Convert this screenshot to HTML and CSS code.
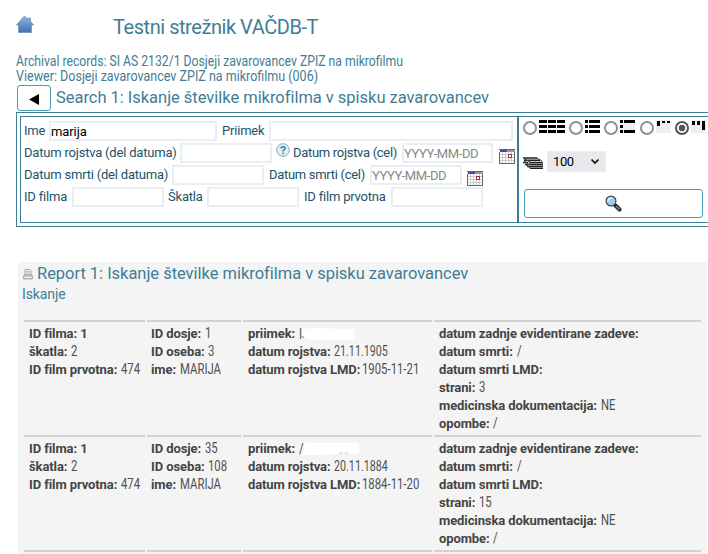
FILE: index.html
```html
<!DOCTYPE html>
<html lang="sl">
<head>
<meta charset="utf-8">
<title>Testni strežnik VAČDB-T</title>
<link rel="stylesheet" href="styles.css">
</head>
<body>
<svg class="defs" width="0" height="0">
  <defs>
    <linearGradient id="roof" x1="0" y1="0" x2="0" y2="1"><stop offset="0" stop-color="#8db4de"/><stop offset="1" stop-color="#3d71b0"/></linearGradient>
    <symbol id="cal" viewBox="0 0 16 15" shape-rendering="crispEdges">
      <path fill="#fff" d="M0 0h16v15H0z"/><path fill="#999" d="M8 0h8v3H8z"/>
      <path stroke="#ccc" d="M3.500 3v11M6.500 3v11M9.500 3v11M12.500 3v11M1 5.500h14M1 8.500h14M1 11.500h14"/>
      <path fill="none" stroke="#666" d="M.5 3v11.500h15V3M0 .5h16"/><path fill="#4545aa" d="M1 1h7v2H1z"/>
      <path fill="#fff" stroke="#a33" d="M9.500 5.500h3v3h-3z"/>
    </symbol>
  </defs>
</svg>
<header class="top">
  <svg class="home" width="18" height="17" viewBox="0 0 18 17"><path fill="url(#roof)" stroke="#5b87b8" stroke-width=".6" d="M9 .5l3 2.500V2h2.500v3.200L17.600 9H15.500v7.500h-13V9H.5L7.500.8z"/></svg>
  <h1>Testni strežnik VAČDB-T</h1>
</header>
<div class="crumbs">
  <div class="c1">Archival records: SI AS 2132/1 Dosjeji zavarovancev ZPIZ na mikrofilmu</div>
  <div class="c2">Viewer: Dosjeji zavarovancev ZPIZ na mikrofilmu (006)</div>
</div>
<div class="search-head">
  <button class="back"><svg width="10" height="11" viewBox="0 0 10 11"><path d="M0 5.500L10 0v11z"/></svg></button>
  <h2>Search 1: Iskanje številke mikrofilma v spisku zavarovancev</h2>
</div>
<form class="search">
  <div class="fields">
    <div class="row"><label class="w-ime">Ime</label><input class="wide1" value="marija"><label class="w-pri">Priimek</label><input class="wide2"></div>
    <div class="row"><label class="w-roj">Datum rojstva (del datuma)</label><input class="i92"><svg class="help" width="14" height="14" viewBox="0 0 14 14"><circle cx="7" cy="7" r="6.300" fill="#e2f0f5" stroke="#82a9b8"/><path fill="none" stroke="#3d79ad" stroke-width="1.500" d="M5 5.500C5 3 9.200 3.200 9 5.400C8.900 6.700 7.100 6.600 7.100 8.400M7.100 9.600v1.400"/></svg><label class="w-rojc">Datum rojstva (cel)</label><input class="i91" placeholder="YYYY-MM-DD"><svg class="cal" width="16" height="15"><use href="#cal"/></svg></div>
    <div class="row"><label class="w-smr">Datum smrti (del datuma)</label><input class="i92"><label class="w-smrc">Datum smrti (cel)</label><input class="i92" placeholder="YYYY-MM-DD"><svg class="cal near" width="16" height="15"><use href="#cal"/></svg></div>
    <div class="row"><label class="w-idf">ID filma</label><input class="i92"><label class="w-ska">Škatla</label><input class="i92"><label class="w-prv">ID film prvotna</label><input class="i92"></div>
  </div>
  <div class="options">
    <div class="views">
      <input type="radio" name="v"><svg width="26" height="13" viewBox="0 0 26 13" shape-rendering="crispEdges"><path stroke="#000" stroke-width="3" stroke-dasharray="8 1" d="M0 1.500h26M0 6.500h26M0 11.500h26"/></svg>
      <input type="radio" name="v"><svg width="15" height="13" viewBox="0 0 15 13" shape-rendering="crispEdges"><path stroke="#000" stroke-width="3" stroke-dasharray="3 1 11 1" d="M0 1.500h15M0 6.500h15M0 11.500h15"/></svg>
      <input type="radio" name="v"><svg class="gap" width="15" height="13" viewBox="0 0 15 13" shape-rendering="crispEdges"><path fill="#eee" d="M0 0h15v13H0z"/><path stroke="#000" stroke-width="3" d="M0 1.500h3M4 1.500h11M0 6.500h3M0 11.500h3M4 11.500h11"/></svg>
      <input type="radio" name="v"><svg width="15" height="13" viewBox="0 0 15 13" shape-rendering="crispEdges"><path fill="#eee" d="M0 0h15v13H0z"/><path d="M1 1h3v5H1zM6 1h3v2H6zM11 1h3v2h-3z"/></svg>
      <input type="radio" name="v" checked><svg width="15" height="13" viewBox="0 0 15 13" shape-rendering="crispEdges"><path fill="#eee" d="M0 0h15v13H0z"/><path d="M1 1h3v4H1zM6 1h3v4H6zM11 1h3v9h-3z"/></svg>
    </div>
    <div class="count">
      <svg width="20" height="12" viewBox="0 0 20 12"><path stroke="#222" stroke-width="1.500" d="M0 1h14M1 3.200h16M0 5.400h5M6 5.400h14M2 7.600h4M6.500 7.600H20M4 9.600h16M7 11.400h13"/><path stroke="#444" d="M0 1l7 4M1 4l6 4M2 7l5 4M14 1l5 3"/></svg>
      <div class="select"><span>100</span><svg width="10" height="7" viewBox="0 0 10 7"><path d="M1.500 1.500L5 5l3.500-3.500" fill="none" stroke="#111" stroke-width="1.700"/></svg></div>
    </div>
    <button class="go" type="button"><svg width="17" height="17" viewBox="0 0 17 17"><path stroke="#222" stroke-width="4" stroke-linecap="round" d="M10.500 10.500l4 4"/><path stroke="#3486c2" stroke-width="2" stroke-linecap="round" d="M11.500 11.500l2.500 2.500"/><circle cx="6" cy="6" r="4.900" fill="#9bd0f4" stroke="#444" stroke-width="1.200"/><path d="M3 6.500C3 4 4.500 3 6.500 3" fill="none" stroke="#d8efff" stroke-width="1.500"/></svg></button>
  </div>
</form>
<main class="report">
  <div class="report-head">
    <svg width="10" height="11" viewBox="0 0 10 11"><path fill="#eee" stroke="#999" stroke-width=".8" d="M2 .5h5l1 1V6H2z"/><path stroke="#c9a0a0" stroke-width=".7" d="M3 2.500h4M3 4h4"/><path fill="#ccc" stroke="#888" stroke-width=".6" d="M1 6h8l.6 2v2H.4V8z"/><path stroke="#eee" d="M1.500 8.500h7"/></svg>
    <h2>Report 1: Iskanje številke mikrofilma v spisku zavarovancev</h2>
  </div>
  <div class="sub">Iskanje</div>
  <div class="grid">
    <div><p><b>ID filma: 1</b></p><p><b>škatla:</b> <span>2</span></p><p><b>ID film prvotna:</b> <span>474</span></p></div>
    <div><p><b>ID dosje:</b> <span>1</span></p><p><b>ID oseba:</b> <span>3</span></p><p><b>ime:</b> <span>MARIJA</span></p></div>
    <div><p class="name"><b>priimek:</b> <span>I</span><svg class="mask" width="54" height="12" viewBox="0 0 54 12"><path fill="#fff" d="M1 2L9 0l43 1 2 2-1 8.500H7L1 7z"/><path d="M1 8l2 2" stroke="#777"/></svg></p><p><b>datum rojstva:</b> <span class="dotted">21.11.1905</span></p><p><b>datum rojstva LMD:</b> <span class="date">1905-11-21</span></p></div>
    <div><p><b>datum zadnje evidentirane zadeve:</b></p><p><b>datum smrti:</b> <span>/</span></p><p><b>datum smrti LMD:</b></p><p><b>strani:</b> <span>3</span></p><p><b>medicinska dokumentacija:</b> <span>NE</span></p><p><b>opombe:</b> <span>/</span></p></div>
    <div><p><b>ID filma: 1</b></p><p><b>škatla:</b> <span>2</span></p><p><b>ID film prvotna:</b> <span>474</span></p></div>
    <div><p><b>ID dosje:</b> <span>35</span></p><p><b>ID oseba:</b> <span>108</span></p><p><b>ime:</b> <span>MARIJA</span></p></div>
    <div><p class="name"><b>priimek:</b> <span>/</span><svg class="mask" width="56" height="12" viewBox="0 0 56 12"><path fill="#fff" d="M2 0h52l2 2v8l-2 1H35l-14 1H0z"/><path d="M36 10h4M42 10h3" stroke="#ccc"/></svg></p><p><b>datum rojstva:</b> <span class="dotted">20.11.1884</span></p><p><b>datum rojstva LMD:</b> <span class="date">1884-11-20</span></p></div>
    <div><p><b>datum zadnje evidentirane zadeve:</b></p><p><b>datum smrti:</b> <span>/</span></p><p><b>datum smrti LMD:</b></p><p><b>strani:</b> <span>15</span></p><p><b>medicinska dokumentacija:</b> <span>NE</span></p><p><b>opombe:</b> <span>/</span></p></div>
    <div></div><div></div><div></div><div></div>
  </div>
</main>
</body>
</html>
```
FILE: styles.css
```css
* { box-sizing: border-box; }
html { overflow: hidden; }
body { margin: 0; padding-top: 16px; height: 554px; overflow: hidden; background: #fff; color: #3f7d94; font: 13px Roboto, "Liberation Sans", sans-serif; }
svg { display: block; flex: none; }
.defs { position: absolute; }
h1, h2, p { margin: 0; font-weight: 400; white-space: nowrap; }
.top { display: flex; height: 38px; padding-left: 16px; }
h1 { margin-left: 79px; font-size: 20px; line-height: 23px; letter-spacing: -.45px; }
.crumbs { padding-left: 16px; line-height: 15px; height: 31px; white-space: nowrap; font-size: 14px; }
.c1, .c2 { width: max-content; transform-origin: left; }
.c1 { transform: scaleX(.871); }
.c2 { transform: scaleX(.894); }
.search-head { display: flex; height: 27px; padding-left: 17px; }
.back { width: 34px; height: 26px; padding: 3px 0 0; border: 1px solid #4c9db5; border-radius: 3px; background: #fff; display: grid; place-items: center; }
h2 { font-size: 16.5px; line-height: 25px; letter-spacing: -.03px; }
.search-head h2 { margin-left: 5px; }
.search { display: flex; width: 720px; height: 115px; margin-left: 16px; padding: 3px; border: 1px solid #3f7d94; color: #235268; }
.fields { width: 499px; padding: 4px 0 0 3px; border: 1px solid #3f7d94; border-right-width: 2px; }
.row { display: flex; height: 22px; align-items: flex-start; }
.row label { flex: none; line-height: 19px; white-space: nowrap; letter-spacing: -.2px; }
.row input { flex: none; height: 20px; padding: 0; border: 2px solid #e7eff3; background: #fff; font: 13px Roboto, sans-serif; letter-spacing: -.1px; color: #000; }
.row input::placeholder { color: #888; opacity: 1; letter-spacing: -.4px; }
.i92 { width: 92px; } .i91 { width: 91px; }
.wide1 { width: 168px; } .wide2 { width: 244px; }
.w-ime { width: 25px; } .w-pri { width: 52px; padding-left: 5px; }
.w-roj { width: 156px; } .row .w-rojc { width: 112px; padding-left: 3px; letter-spacing: -.3px; }
.w-smr { width: 148px; } .row .w-smrc { width: 106px; padding-left: 5px; letter-spacing: -.3px; }
.w-idf { width: 48px; } .w-ska { width: 43px; padding-left: 4px; } .w-prv { width: 92px; padding-left: 5px; }
.help { margin-left: 4px; }
.cal { margin: 6px 0 0 6px; }
.near { margin-left: 5px; }
.options { width: 210px; border: 1px solid #3f7d94; border-left: 0; padding: 3px 0 0 4px; }
.views { display: flex; height: 31px; }
.views input { appearance: none; width: 14px; height: 14px; margin: 1px 2px 0 0; border: 2px solid #8f8f9d; border-radius: 50%; }
.views input:checked { border-color: #555; background: radial-gradient(circle, #555 3px, #fff 3.600px); }
.views svg { margin-right: 4px; }
.views .gap { margin-right: 5px; }
.count { display: flex; height: 38px; }
.count > svg { margin-top: 6px; }
.select { display: flex; align-items: center; justify-content: space-between; width: 59px; height: 21px; margin-left: 4px; padding: 0 5px; background: #e9e9ed; border: 1px solid #e7eff3; color: #000; letter-spacing: -.4px; }
.go { width: 179px; height: 29px; margin-left: 1px; border: 1px solid #4c9db5; border-radius: 3px; background: #fff; display: grid; place-items: center; }
.report { width: 689px; height: 292px; margin: 35px 0 0 18px; background: #f4f4f4; overflow: hidden; }
.report-head { display: flex; padding-left: 5px; }
.report-head svg { margin-top: 7px; }
.report-head h2 { margin-left: 4px; line-height: 23px; }
.sub { padding-left: 4px; font-size: 14px; letter-spacing: -.1px; line-height: 18px; height: 35px; }
.grid { display: grid; grid-template-columns: 121px 94px 189px 267px; column-gap: 2px; grid-auto-rows: 115px; padding-left: 6px; color: #505050; }
.grid > div { border-top: 2px solid #d2d2d2; padding: 3px 0 0 5px; line-height: 18px; }
.grid > div:nth-child(4n + 2) { padding-left: 4px; }
.grid p { height: 18px; }
.grid b { letter-spacing: -.1px; color: #444; }
.grid span { display: inline-block; font-size: 14px; line-height: 16px; transform: scaleX(.81); transform-origin: left; margin-left: .5px; }
.grid .dotted { transform: scaleX(.765); margin-left: 0; }
.grid .date { margin-left: -1px; }
.name { display: flex; white-space: pre; align-items: center; }
.grid .name span { margin-left: 4px; }
.mask { margin-left: -2px; }
```
